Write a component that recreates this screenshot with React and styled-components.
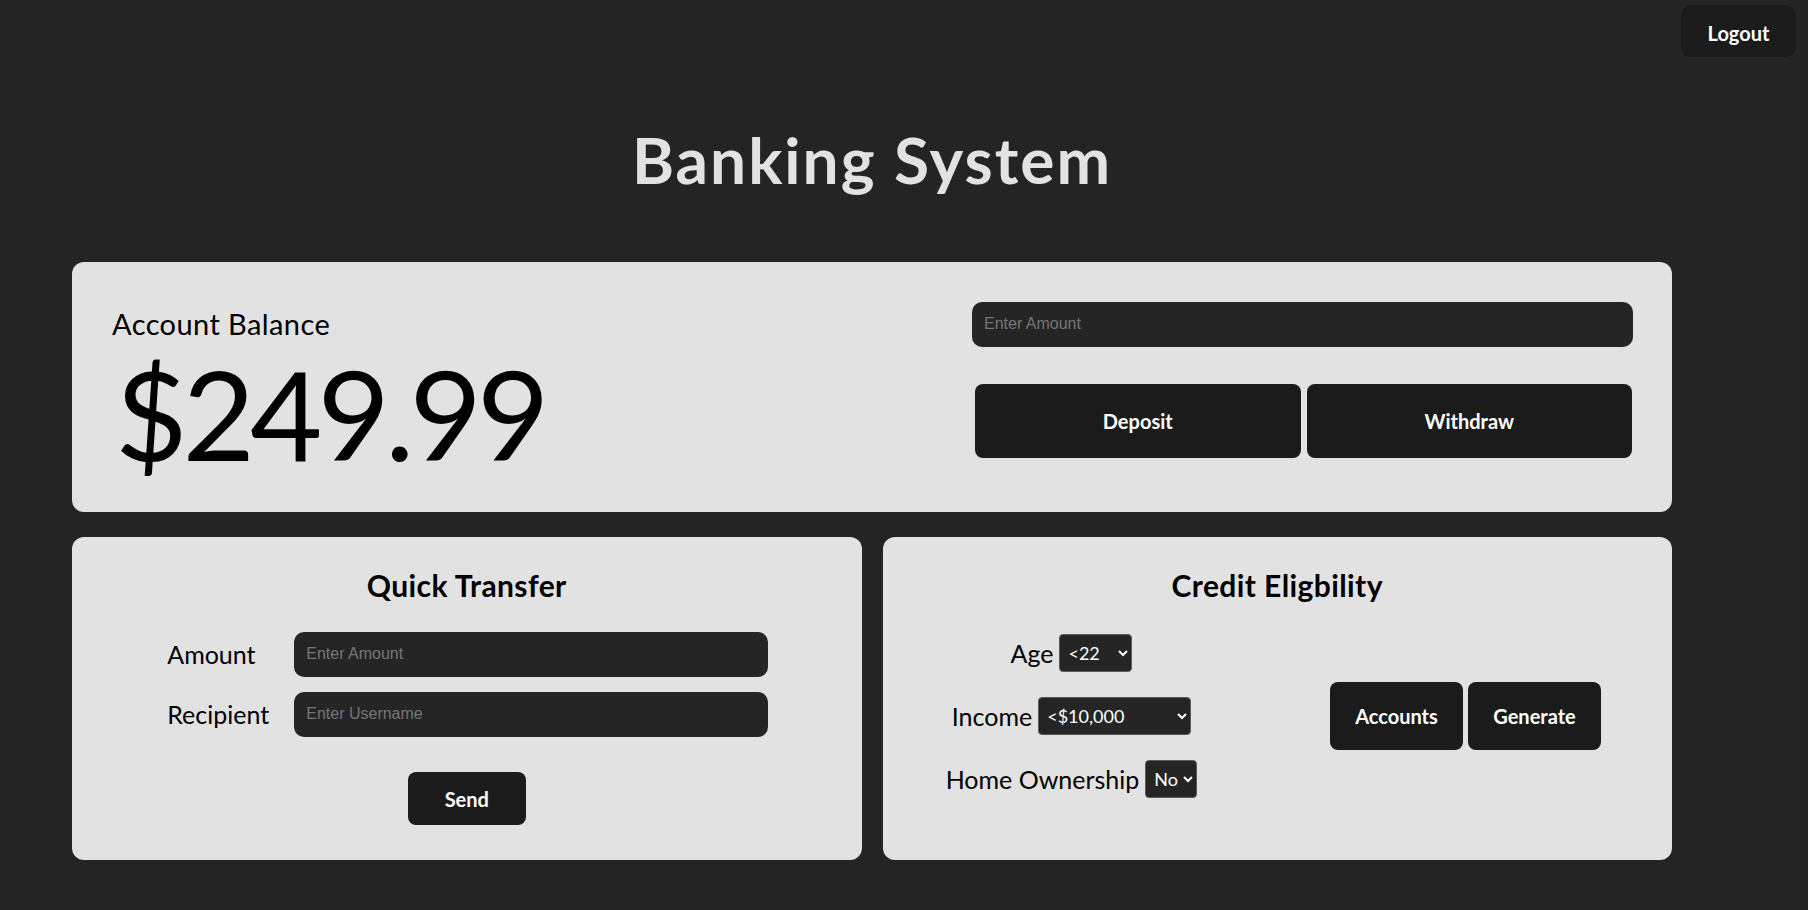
import React from 'react';
import styled, { createGlobalStyle } from 'styled-components';

const GlobalStyle = createGlobalStyle`
  body {
    margin: 0;
    background: #242424;
    font-family: Lato, "Open Sans", sans-serif;
  }
`;

const Page = styled.div`
  position: relative;
  min-height: 100vh;
  padding-left: 72px;
  box-sizing: border-box;
`;

const Button = styled.button`
  border: none;
  border-radius: 8px;
  background: #1b1b1b;
  color: #fff;
  font-family: Lato, "Open Sans", sans-serif;
  font-size: 20px;
  font-weight: 700;
  width: ${props => props.$w || 'auto'};
  height: ${props => props.$h || 'auto'};
  padding-top: 2px;
  cursor: pointer;
`;

const LogoutButton = styled(Button)`
  position: absolute;
  top: 5px;
  right: 12px;
  width: 115px;
  height: 52px;
  border-radius: 10px;
  padding-top: 4px;
`;

const Main = styled.main`
  width: 1600px;
  display: flex;
  flex-direction: column;
`;

const Title = styled.h1`
  margin: 122px 0 63px;
  font-size: 64px;
  font-weight: 700;
  line-height: 1.2;
  letter-spacing: 2px;
  text-align: center;
  color: #e2e2e2;
`;

const Card = styled.section`
  background: #e2e2e2;
  border-radius: 12px;
  box-sizing: border-box;
`;

const BalanceCard = styled(Card)`
  height: 250px;
  padding: 40px 39px 40px 40px;
  display: flex;
  justify-content: space-between;
`;

const BalanceInfo = styled.div`
  display: flex;
  flex-direction: column;
`;

const BalanceLabel = styled.div`
  margin-top: 5px;
  font-size: 29px;
  line-height: 1.2;
  letter-spacing: 0.4px;
  color: #000;
`;

const BalanceAmount = styled.div`
  margin-top: 9px;
  margin-left: 3px;
  font-size: 125px;
  line-height: 1;
  letter-spacing: -5px;
  color: #000;
`;

const Actions = styled.div`
  width: 661px;
  display: flex;
  flex-direction: column;
  gap: 37px;
`;

const TextInput = styled.input`
  width: ${props => props.$w || '100%'};
  height: 45px;
  box-sizing: border-box;
  padding: 0 12px;
  border: none;
  border-radius: 10px;
  background: #252525;
  color: #e2e2e2;
  font-family: "Liberation Sans", Arial, sans-serif;
  font-size: 16px;
  outline: none;
  &::placeholder {
    color: #767676;
  }
`;

const ButtonPair = styled.div`
  display: grid;
  grid-template-columns: 1fr 1fr;
  gap: 6px;
  padding: 0 1px 0 3px;
`;

const BottomRow = styled.div`
  margin-top: 25px;
  display: grid;
  grid-template-columns: 1fr 1fr;
  gap: 21px;
`;

const Panel = styled(Card)`
  height: 323px;
  padding-top: 30px;
  display: flex;
  flex-direction: column;
  align-items: center;
`;

const PanelTitle = styled.h2`
  margin: 0 0 29px;
  font-size: 30px;
  font-weight: 700;
  line-height: 1.2;
  letter-spacing: 0.4px;
  color: #000;
`;

const TransferForm = styled.div`
  display: grid;
  grid-template-columns: 127px 474px;
  row-gap: 15px;
  align-items: center;
  margin-left: 2px;
`;

const FieldLabel = styled.label`
  font-size: 25px;
  line-height: 1.2;
  color: #000;
`;

const SendButton = styled(Button)`
  margin-top: 35px;
  width: 118px;
  height: 53px;
`;

const CreditBody = styled.div`
  width: 100%;
  box-sizing: border-box;
  padding: 0 71px 0 59px;
  margin-top: 2px;
  display: flex;
  align-items: center;
  justify-content: space-between;
`;

const Criteria = styled.div`
  width: 260px;
  display: flex;
  flex-direction: column;
  align-items: center;
  gap: 25px;
`;

const CriteriaRow = styled.div`
  display: flex;
  align-items: center;
  gap: 6px;
`;

const Select = styled.select`
  width: ${props => props.$w};
  height: 38px;
  padding: 0 2px 0 4px;
  border: 1px solid #5a5a5a;
  border-radius: 4px;
  background: #252525;
  color: #fff;
  color-scheme: dark;
  font-family: Lato, "Open Sans", sans-serif;
  font-size: 18px;
`;

const CreditButtons = styled.div`
  display: flex;
  gap: 5px;
`;

export default function App() {
  return (
    <Page>
      <GlobalStyle />
      <LogoutButton>Logout</LogoutButton>
      <Main>
        <Title>Banking System</Title>

        <BalanceCard>
          <BalanceInfo>
            <BalanceLabel>Account Balance</BalanceLabel>
            <BalanceAmount>$249.99</BalanceAmount>
          </BalanceInfo>
          <Actions>
            <TextInput placeholder="Enter Amount" />
            <ButtonPair>
              <Button $h="74px">Deposit</Button>
              <Button $h="74px">Withdraw</Button>
            </ButtonPair>
          </Actions>
        </BalanceCard>

        <BottomRow>
          <Panel>
            <PanelTitle>Quick Transfer</PanelTitle>
            <TransferForm>
              <FieldLabel>Amount</FieldLabel>
              <TextInput placeholder="Enter Amount" />
              <FieldLabel>Recipient</FieldLabel>
              <TextInput placeholder="Enter Username" />
            </TransferForm>
            <SendButton>Send</SendButton>
          </Panel>

          <Panel>
            <PanelTitle>Credit Eligbility</PanelTitle>
            <CreditBody>
              <Criteria>
                <CriteriaRow>
                  <FieldLabel>Age</FieldLabel>
                  <Select $w="73px" defaultValue="<22">
                    <option>&lt;22</option>
                    <option>22-30</option>
                    <option>30-45</option>
                    <option>45+</option>
                  </Select>
                </CriteriaRow>
                <CriteriaRow>
                  <FieldLabel>Income</FieldLabel>
                  <Select $w="153px" defaultValue="<$10,000">
                    <option>&lt;$10,000</option>
                    <option>$10,000-$50,000</option>
                    <option>$50,000+</option>
                  </Select>
                </CriteriaRow>
                <CriteriaRow>
                  <FieldLabel>Home Ownership</FieldLabel>
                  <Select $w="52px" defaultValue="No">
                    <option>No</option>
                    <option>Yes</option>
                  </Select>
                </CriteriaRow>
              </Criteria>
              <CreditButtons>
                <Button $w="133px" $h="68px">Accounts</Button>
                <Button $w="133px" $h="68px">Generate</Button>
              </CreditButtons>
            </CreditBody>
          </Panel>
        </BottomRow>
      </Main>
    </Page>
  );
}
